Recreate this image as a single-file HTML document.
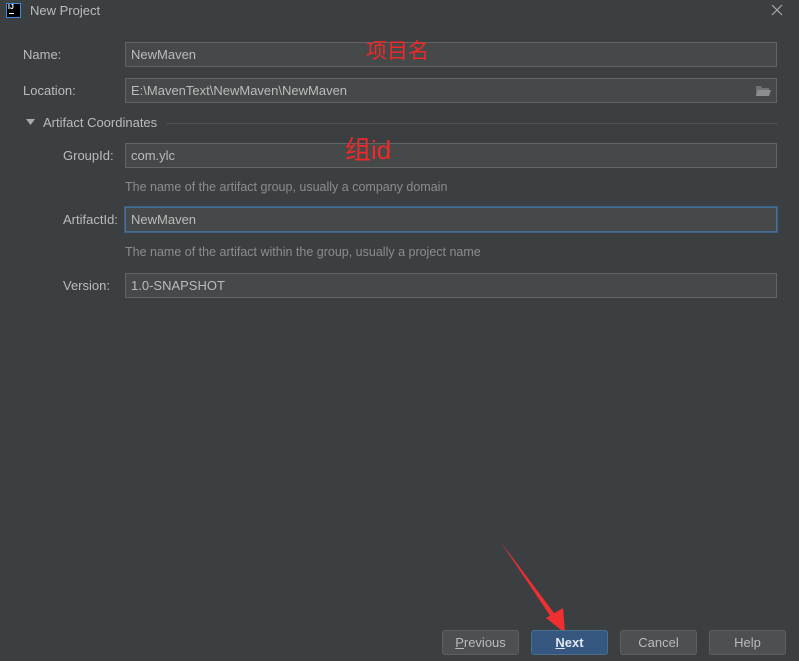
<html><head><style>
body{margin:0;width:799px;height:661px;background:#3c3f41;font-family:"Liberation Sans","Noto Sans CJK SC",sans-serif;font-size:13px;color:#bbbbbb;position:relative;overflow:hidden}
.a{position:absolute}
.f{position:absolute;left:125px;height:23px;background:#45494a;border:1px solid #646464;line-height:23px;padding-left:5px;width:645px}
.l{position:absolute;line-height:25px}
.h{position:absolute;left:125px;color:#8c8c8c;font-size:12.5px}
.b{position:absolute;top:630px;width:75px;height:23px;border:1px solid #5e6060;background:#4c5052;border-radius:3px;text-align:center;line-height:23px}
.r{position:absolute;color:#f02828;font-size:21px}
</style></head><body>
<div class="a" style="left:6px;top:3px;width:13px;height:13px;border:1px solid #3a8ae0;background:#000"></div>
<div class="a" style="left:8px;top:4px;color:#fff;font-size:7px;font-weight:bold;line-height:7px">IJ</div>
<div class="a" style="left:9px;top:13px;width:5px;height:1px;background:#fff"></div>
<div class="a" style="left:30px;top:3px">New Project</div>
<svg class="a" style="left:771px;top:4px" width="12" height="12"><path d="M1 1L11 11M11 1L1 11" stroke="#aaa" stroke-width="1.2"/></svg>
<div class="l" style="left:23px;top:42px">Name:</div>
<div class="f" style="top:42px">NewMaven</div>
<div class="l" style="left:23px;top:78px">Location:</div>
<div class="f" style="top:78px">E:\MavenText\NewMaven\NewMaven</div>
<svg class="a" style="left:755px;top:84px" width="16" height="13"><path d="M1 2h5l1 2h7v8H1z" fill="#6e7274"/><path d="M3 6h13l-2 6H1z" fill="#8a8e90"/></svg>
<svg class="a" style="left:26px;top:119px" width="10" height="7"><path d="M0 0h9L4.5 6z" fill="#aaa"/></svg>
<div class="a" style="left:43px;top:115px">Artifact Coordinates</div>
<div class="a" style="left:166px;top:123px;width:612px;height:1px;background:#515151"></div>
<div class="l" style="left:63px;top:143px">GroupId:</div>
<div class="f" style="top:143px">com.ylc</div>
<div class="h" style="top:180px">The name of the artifact group, usually a company domain</div>
<div class="l" style="left:63px;top:207px">ArtifactId:</div>
<div class="f" style="top:207px;border:1px solid #466d94;box-shadow:0 0 0 1px #3d6185">NewMaven</div>
<div class="h" style="top:245px">The name of the artifact within the group, usually a project name</div>
<div class="l" style="left:63px;top:273px">Version:</div>
<div class="f" style="top:273px">1.0-SNAPSHOT</div>
<div class="r" style="left:366px;top:35px">项目名</div>
<div class="r" style="left:345px;top:130px;font-size:26px">组id</div>
<svg class="a" style="left:495px;top:538px" width="80" height="100"><path d="M5 3L58 82L62 79z" fill="#f03030"/><path d="M51 80L70 95L68 70z" fill="#f03030"/></svg>
<div class="b" style="left:442px"><u>P</u>revious</div>
<div class="b" style="left:531px;background:#365880;border-color:#4c708c;color:#dfe6ee;font-weight:bold"><u>N</u>ext</div>
<div class="b" style="left:620px">Cancel</div>
<div class="b" style="left:709px">Help</div>
</body></html>
